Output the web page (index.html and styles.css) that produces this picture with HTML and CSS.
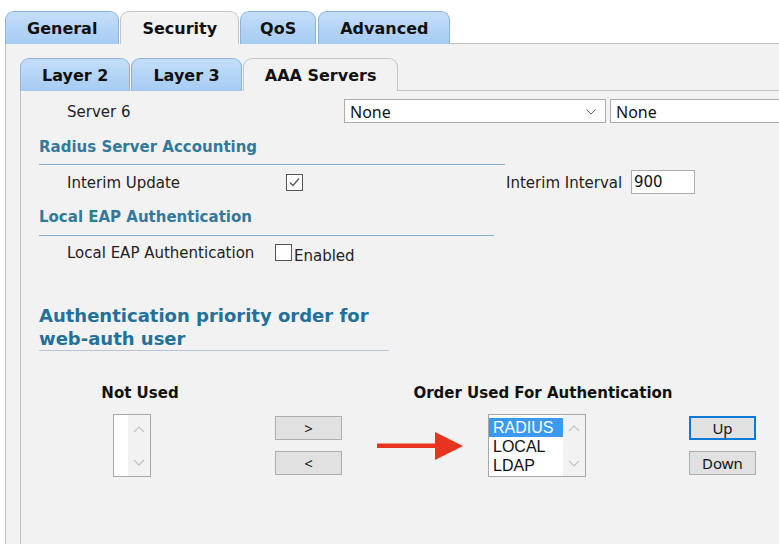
FILE: index.html
```html
<!DOCTYPE html>
<html>
<head>
<meta charset="utf-8">
<link rel="stylesheet" href="styles.css">
</head>
<body>
<div class="app">
  <div class="tabbar">
    <div class="tab">General</div>
    <div class="tab active">Security</div>
    <div class="tab tab-qos">QoS</div>
    <div class="tab">Advanced</div>
    <div class="tab-fill"></div>
  </div>
  <div class="panel outer-panel">
    <div class="tabbar">
      <div class="tab">Layer 2</div>
      <div class="tab">Layer 3</div>
      <div class="tab active">AAA Servers</div>
      <div class="tab-fill"></div>
    </div>
    <div class="panel inner-panel">
      <div class="row server-row">
        <span class="label server-label">Server 6</span>
        <div class="select sel1">
          <span>None</span>
          <svg class="chev" width="10" height="6" viewBox="0 0 10 6"><polyline points="0.5,0.5 5,5 9.5,0.5" fill="none" stroke="#6d6d6d" stroke-width="1"/></svg>
        </div>
        <div class="select sel2"><span>None</span></div>
      </div>

      <h3 class="section sec-radius">Radius Server Accounting</h3>
      <div class="row interim-row">
        <span class="label interim-label">Interim Update</span>
        <span class="check"><svg width="15" height="15" viewBox="0 0 15 15"><polyline points="3,7.5 6,10.5 12,3.5" fill="none" stroke="#555" stroke-width="1.2"/></svg></span>
        <span class="label interval-label">Interim Interval</span>
        <span class="textbox">900</span>
      </div>

      <h3 class="section sec-eap">Local EAP Authentication</h3>
      <div class="row eap-row">
        <span class="label eap-label">Local EAP Authentication</span>
        <span class="check"></span>
        <span class="label enabled">Enabled</span>
      </div>

      <h2 class="big">Authentication priority order for<br>web-auth user</h2>

      <div class="heads">
        <div class="head">Not Used</div>
        <div class="head">Order Used For Authentication</div>
      </div>

      <div class="controls">
        <div class="listbox list-empty">
          <div class="items"></div>
          <div class="sbar">
            <svg width="12" height="7" viewBox="0 0 12 7"><polyline points="1,6 6,1 11,6" fill="none" stroke="#c3c3c3" stroke-width="1.2"/></svg>
            <svg width="12" height="7" viewBox="0 0 12 7"><polyline points="1,1 6,6 11,1" fill="none" stroke="#c3c3c3" stroke-width="1.2"/></svg>
          </div>
        </div>
        <div class="btncol move-btns">
          <div class="btn">&gt;</div>
          <div class="btn">&lt;</div>
        </div>
        <svg class="arrow" width="86" height="28" viewBox="0 0 86 28"><rect x="0" y="11.5" width="62" height="4.5" fill="#e8341f"/><polygon points="58,0 86,14 58,28" fill="#e8341f"/></svg>
        <div class="listbox list-order">
          <div class="items">
            <div class="item selected">RADIUS</div>
            <div class="item">LOCAL</div>
            <div class="item">LDAP</div>
          </div>
          <div class="sbar">
            <svg width="12" height="7" viewBox="0 0 12 7"><polyline points="1,6 6,1 11,6" fill="none" stroke="#c3c3c3" stroke-width="1.2"/></svg>
            <svg width="12" height="7" viewBox="0 0 12 7"><polyline points="1,1 6,6 11,1" fill="none" stroke="#c3c3c3" stroke-width="1.2"/></svg>
          </div>
        </div>
        <div class="btncol order-btns">
          <div class="btn focus">Up</div>
          <div class="btn">Down</div>
        </div>
      </div>
    </div>
  </div>
</div>
</body>
</html>
```

FILE: styles.css
```css
html, body {
  margin: 0;
  padding: 0;
}
body {
  width: 779px;
  height: 544px;
  overflow: hidden;
  background: #ffffff;
  font-family: "DejaVu Sans", Verdana, sans-serif;
  color: #222;
}
.app {
  margin: 11px 0 0 5px;
  width: 1100px;
}
.tabbar {
  display: flex;
  align-items: flex-end;
}
.tab {
  box-sizing: border-box;
  height: 33px;
  padding: 0 21px;
  font-size: 16px;
  font-weight: bold;
  line-height: 33px;
  color: #111;
  background: linear-gradient(#c4def9, #a6cbf3);
  border: 1px solid #8db4de;
  border-bottom: none;
  border-radius: 9px 9px 0 0;
  margin-right: 1px;
  white-space: nowrap;
}
.tab-qos {
  padding: 0 19px;
  margin-right: 2px;
}
.tab.active {
  background: #f2f2f2;
  border-color: #c6c6c6;
}
.tab-fill {
  flex: 1;
  border-bottom: 1px solid #c2c2c2;
  margin-left: -1px;
}
.panel {
  background: #f2f2f2;
  border-left: 1px solid #c2c2c2;
}
.outer-panel {
  padding: 14px 0 0 14px;
  height: 520px;
}
.inner-panel {
  padding: 8px 0 0 18px;
  height: 480px;
}
.row {
  display: flex;
  align-items: center;
  height: 24px;
}
.label {
  font-size: 15px;
  color: #222;
  white-space: nowrap;
  padding-top: 2px;
}
.server-label {
  margin-left: 28px;
  width: 277px;
}
.select {
  box-sizing: border-box;
  height: 24px;
  background: #fff;
  border: 1px solid #acacac;
  display: flex;
  align-items: center;
  justify-content: space-between;
  padding: 1px 9px 0 5px;
  font-family: "Noto Sans", "Open Sans", sans-serif;
  font-size: 16px;
  color: #111;
}
.sel1 {
  width: 262px;
}
.sel2 {
  width: 220px;
  margin-left: 4px;
}
.section {
  margin: 14px 0 0 0;
  width: 466px;
  font-size: 15px;
  font-weight: bold;
  line-height: 20px;
  color: #33799a;
  padding-bottom: 7px;
  border-bottom: 1px solid #86afca;
}
.sec-eap {
  margin-top: 13px;
  width: 455px;
  padding-bottom: 8px;
}
.interim-row {
  margin-top: 5px;
}
.interim-label {
  margin-left: 28px;
  width: 219px;
}
.check {
  box-sizing: border-box;
  width: 17px;
  height: 17px;
  border: 1px solid #555;
  background: #fff;
  display: flex;
  align-items: center;
  justify-content: center;
}
.interval-label {
  margin-left: 203px;
  width: 125px;
}
.textbox {
  box-sizing: border-box;
  width: 64px;
  height: 24px;
  background: #fff;
  border: 1px solid #acacac;
  font-size: 15px;
  line-height: 23px;
  padding-left: 2px;
  color: #111;
}
.eap-row {
  margin-top: 4px;
}
.eap-label {
  margin-left: 28px;
  width: 208px;
}
.enabled {
  margin-left: 2px;
  margin-top: 6px;
}
.big {
  margin: 40px 0 0 0;
  width: 350px;
  font-size: 18px;
  line-height: 23px;
  font-weight: bold;
  color: #23709a;
  border-bottom: 1px solid #b9c3d3;
}
.heads {
  display: grid;
  grid-template-columns: 202px 604px;
  margin-top: 31px;
}
.head {
  text-align: center;
  font-size: 15px;
  font-weight: bold;
  line-height: 20px;
  padding-top: 1px;
  color: #111;
  white-space: nowrap;
}
.controls {
  display: flex;
  align-items: flex-start;
  margin-top: 11px;
}
.listbox {
  box-sizing: border-box;
  height: 63px;
  border: 1px solid #a8a8a8;
  background: #fff;
  display: flex;
}
.list-empty {
  width: 38px;
  margin-left: 74px;
}
.list-order {
  width: 98px;
  margin-left: 25px;
}
.items {
  flex: 1;
  background: #fff;
  padding-top: 3px;
}
.sbar {
  width: 22px;
  background: #f2f2f2;
  display: flex;
  flex-direction: column;
  justify-content: space-between;
  align-items: center;
  padding: 11px 0 10px 0;
  box-sizing: border-box;
}
.list-order .sbar {
  padding: 10px 0 9px 0;
}
.item {
  font-family: "Liberation Sans", Arial, sans-serif;
  font-size: 16px;
  line-height: 19px;
  height: 19px;
  padding-left: 4px;
  color: #111;
}
.item.selected {
  background: #3b99f0;
  color: #fff;
}
.btncol {
  width: 67px;
  display: flex;
  flex-direction: column;
  gap: 11px;
  padding-top: 2px;
}
.move-btns {
  margin-left: 124px;
}
.order-btns {
  margin-left: 103px;
}
.btn {
  box-sizing: border-box;
  height: 24px;
  background: #e1e1e1;
  border: 1px solid #adadad;
  text-align: center;
  font-family: "Noto Sans", "Open Sans", sans-serif;
  font-size: 15px;
  line-height: 23px;
  color: #111;
}
.btn.focus {
  border: 2px solid #0a7ad6;
  line-height: 21px;
}
.arrow {
  margin-left: 35px;
  margin-top: 18px;
}
```
